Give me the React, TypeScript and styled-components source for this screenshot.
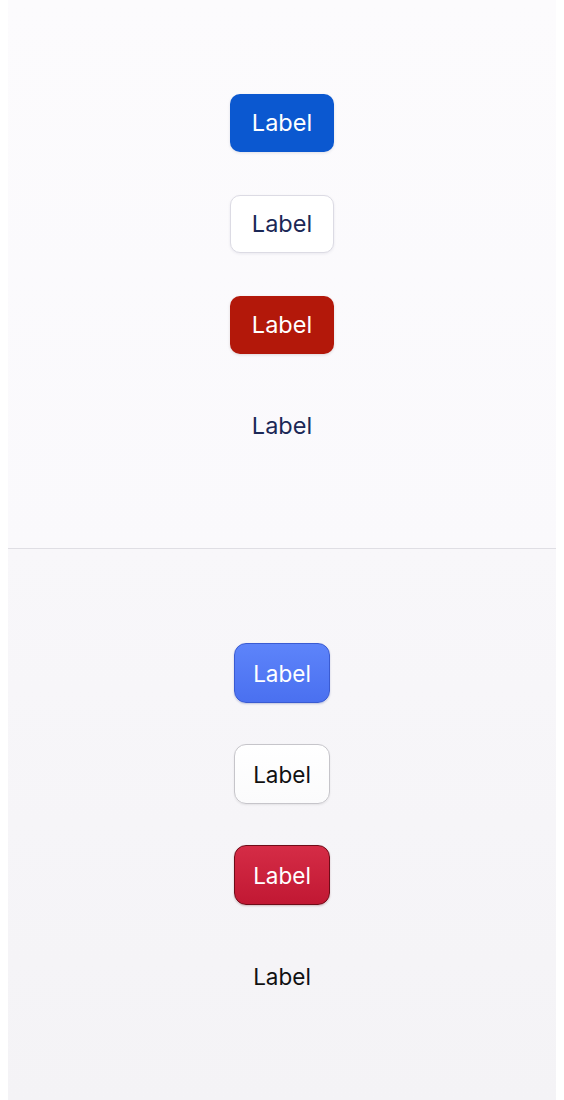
import React from "react"
import styled, { createGlobalStyle, css } from "styled-components"

type Variant = "primary" | "secondary" | "danger" | "ghost"

const variants: Array<Variant> = ["primary", "secondary", "danger", "ghost"]

export default function App() {
	return (
		<>
			<GlobalStyle />
			<Page>
				<Panel $tone="web">
					{variants.map(v => (
						<WebButton key={v} $variant={v}>
							Label
						</WebButton>
					))}
				</Panel>
				<Divider />
				<Panel $tone="mac">
					{variants.map(v => (
						<MacButton key={v} $variant={v}>
							Label
						</MacButton>
					))}
				</Panel>
			</Page>
		</>
	)
}

const GlobalStyle = createGlobalStyle`
	html, body {
		margin: 0;
		background: #ffffff;
		font-family: Inter, "Noto Sans", sans-serif;
	}
`

const Page = styled.div`
	display: flex;
	flex-direction: column;
	margin: 0 8px;
	height: 1100px;
`

const Panel = styled.div<{ $tone: "web" | "mac" }>`
	display: flex;
	flex-direction: column;
	align-items: center;
	justify-content: center;
	${p =>
		p.$tone === "web"
			? css`
					height: 548px;
					gap: 43px;
					background: linear-gradient(180deg, #fcfbfd 0%, #faf9fc 100%);
			  `
			: css`
					flex: 1;
					gap: 41px;
					background: linear-gradient(180deg, #f8f7fa 0%, #f4f3f6 100%);
			  `}
`

const Divider = styled.div`
	height: 1px;
	background: #dfdee4;
	box-shadow: 0 1px 0 #ffffff;
`

const ButtonBase = styled.button`
	display: flex;
	align-items: center;
	justify-content: center;
	font-family: Inter, "Noto Sans", sans-serif;
	cursor: pointer;
	box-sizing: border-box;
`

const WebButton = styled(ButtonBase)<{ $variant: Variant }>`
	height: 58px;
	min-width: 104px;
	padding: 0 20px;
	border-radius: 10px;
	font-size: 23.5px;
	font-weight: 400;
	border: 1px solid transparent;
	${p => {
		switch (p.$variant) {
			case "primary":
				return css`
					background: #0b58d0;
					color: #ffffff;
					box-shadow: 0 1px 3px rgba(20, 30, 80, 0.12);
				`
			case "secondary":
				return css`
					background: #ffffff;
					color: #1b2856;
					border-color: #dcdbe4;
					box-shadow: 0 1px 3px rgba(20, 30, 80, 0.08);
				`
			case "danger":
				return css`
					background: #b3180a;
					color: #ffffff;
					box-shadow: 0 1px 3px rgba(60, 20, 20, 0.15);
				`
			default:
				return css`
					background: transparent;
					color: #1b2856;
				`
		}
	}}
`

const MacButton = styled(ButtonBase)<{ $variant: Variant }>`
	height: 60px;
	min-width: 96px;
	padding: 0 18px;
	border-radius: 12px;
	font-size: 22.5px;
	font-weight: 400;
	border: 1.5px solid transparent;
	${p => {
		switch (p.$variant) {
			case "primary":
				return css`
					background: linear-gradient(180deg, #5d84fa 0%, #4a70f0 100%);
					border-color: #3a5bd2;
					color: #ffffff;
					box-shadow: 0 1px 2px rgba(30, 50, 140, 0.25);
				`
			case "secondary":
				return css`
					background: linear-gradient(180deg, #ffffff 0%, #fbfbfc 100%);
					border-color: #c6c5ca;
					color: #111111;
					box-shadow: 0 1px 2px rgba(0, 0, 0, 0.08);
				`
			case "danger":
				return css`
					background: linear-gradient(180deg, #d52c46 0%, #c11833 100%);
					border-color: #6f0c18;
					color: #ffffff;
					box-shadow: 0 1px 2px rgba(90, 10, 20, 0.25);
				`
			default:
				return css`
					background: transparent;
					color: #111111;
				`
		}
	}}
`
